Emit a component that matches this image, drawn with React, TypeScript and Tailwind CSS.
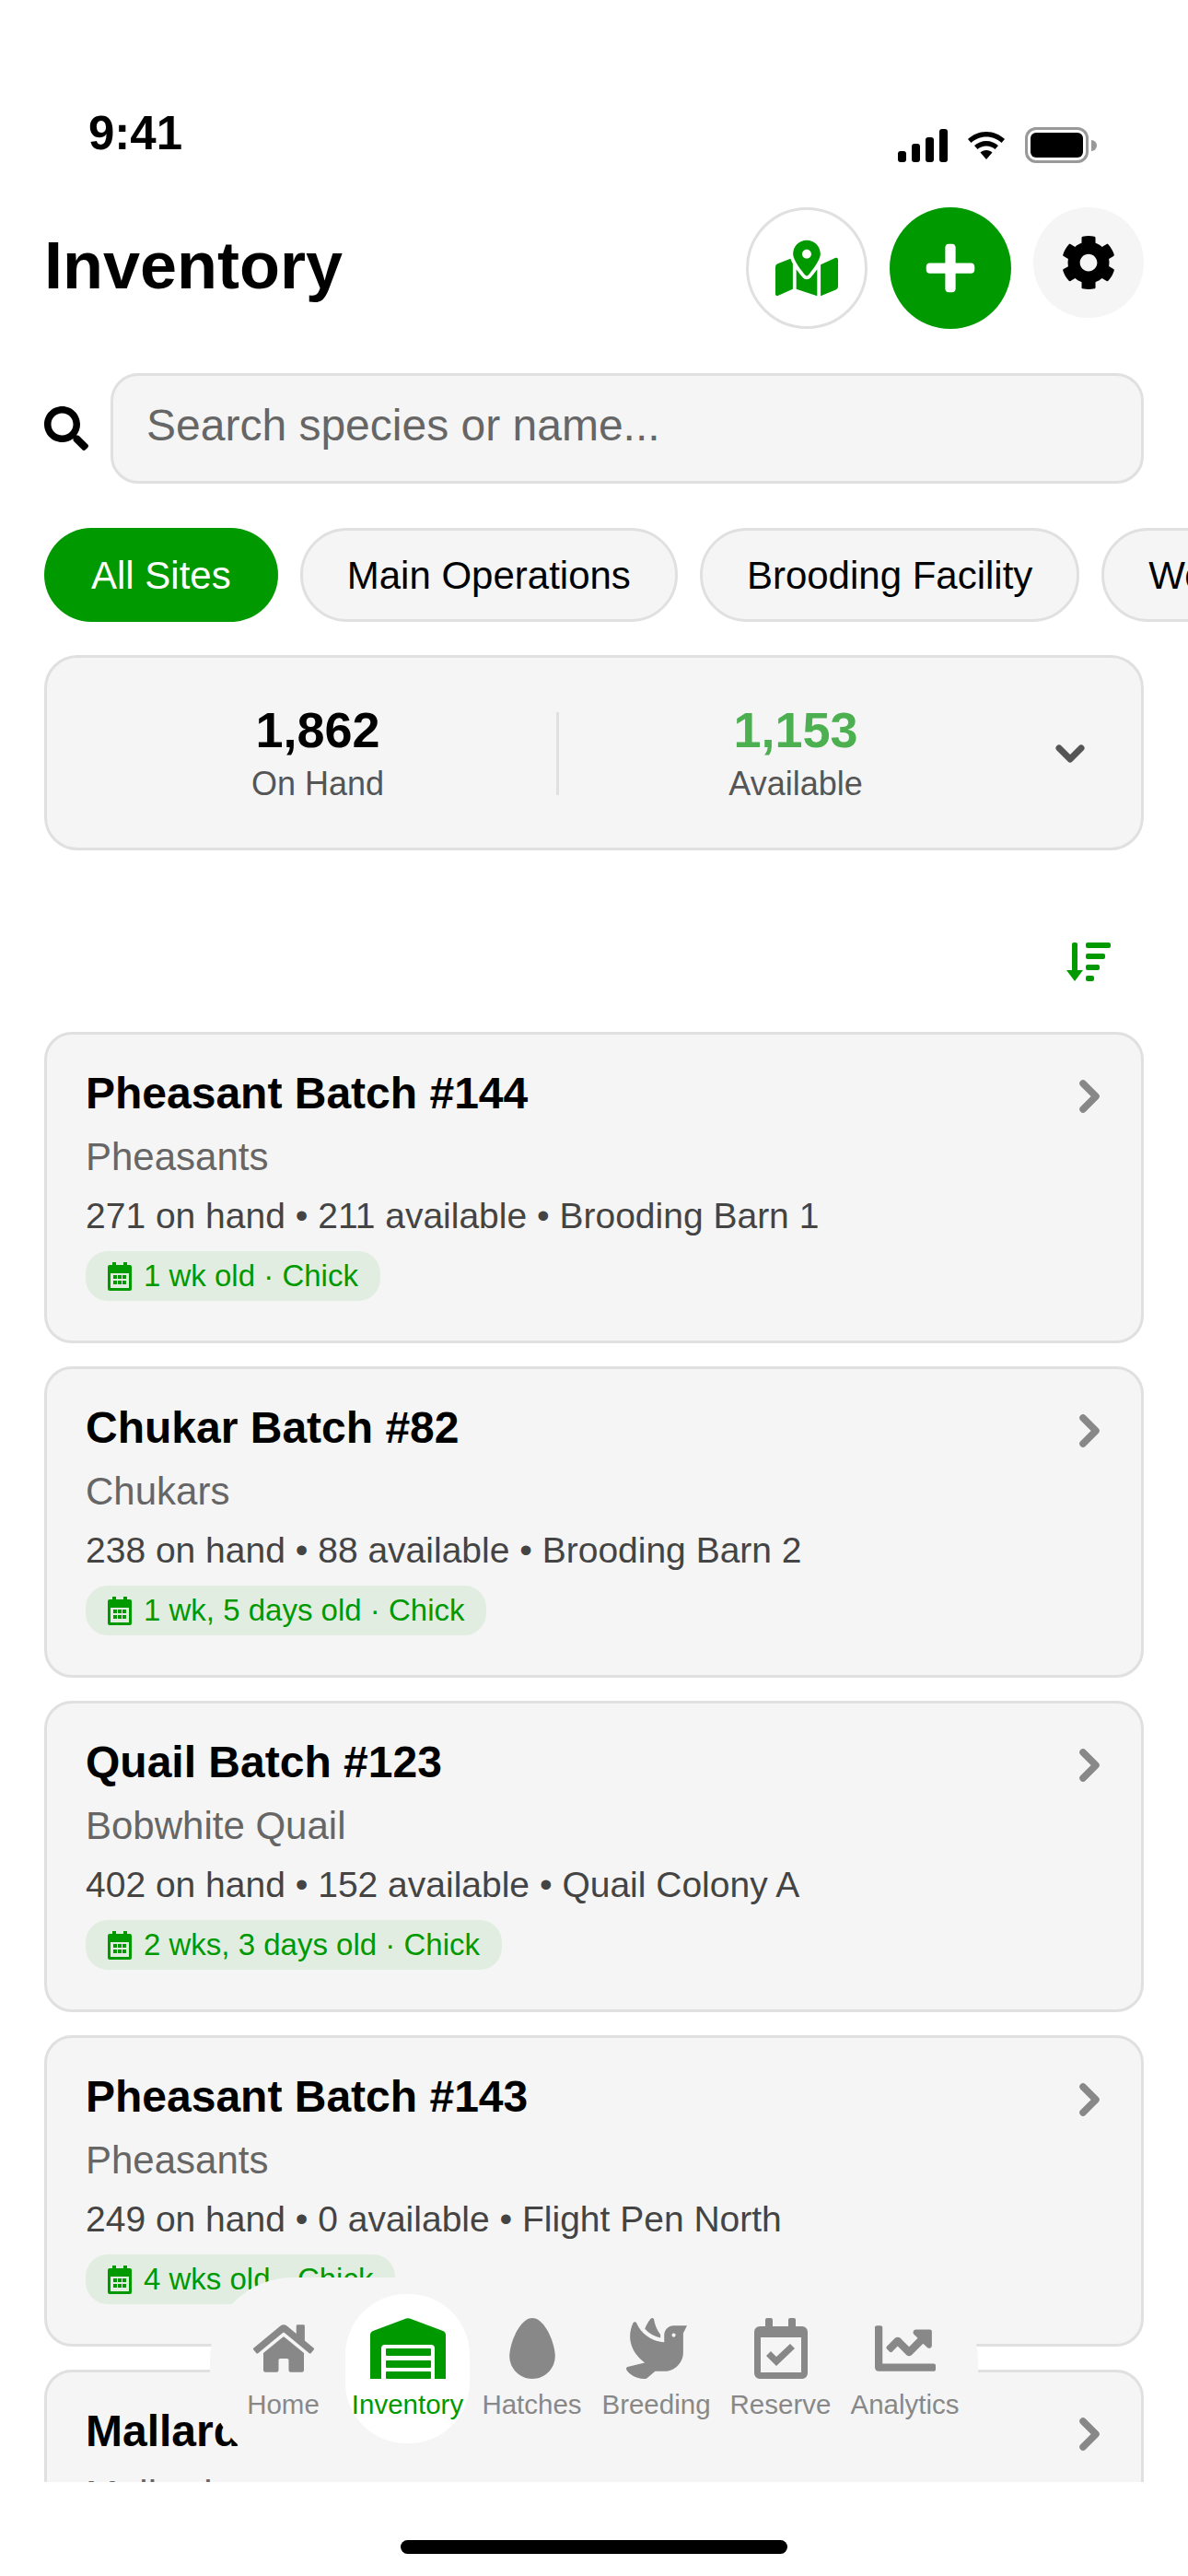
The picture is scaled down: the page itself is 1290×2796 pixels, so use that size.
import { FaChartLine, FaCog, FaDove, FaEgg, FaHome, FaMapMarkedAlt, FaPlus, FaSearch } from "react-icons/fa";

const batches = [
  { name: "Pheasant Batch #144", species: "Pheasants", detail: "271 on hand • 211 available • Brooding Barn 1", age: "1 wk old · Chick" },
  { name: "Chukar Batch #82", species: "Chukars", detail: "238 on hand • 88 available • Brooding Barn 2", age: "1 wk, 5 days old · Chick" },
  { name: "Quail Batch #123", species: "Bobwhite Quail", detail: "402 on hand • 152 available • Quail Colony A", age: "2 wks, 3 days old · Chick" },
  { name: "Pheasant Batch #143", species: "Pheasants", detail: "249 on hand • 0 available • Flight Pen North", age: "4 wks old · Chick" },
  { name: "Mallard Batch #61", species: "Mallards", detail: "312 on hand • 140 available • Waterfowl Pond", age: "3 wks old · Duckling" },
];

const sites = ["All Sites", "Main Operations", "Brooding Facility", "Woodland Pens"];

function StatusIcons() {
  return (
    <div className="mt-[23px] flex items-center">
      <svg width="54" height="36" viewBox="0 0 54 36" fill="#000">
        <rect x="0" y="24" width="9" height="12" rx="3" />
        <rect x="15" y="16" width="9" height="20" rx="3" />
        <rect x="30" y="9" width="9" height="27" rx="3" />
        <rect x="45" y="0" width="9" height="36" rx="3" />
      </svg>
      <svg className="ml-[22px]" width="40" height="30" viewBox="0 0 40 30" fill="#000">
        <path d="M20 0C12 0 5.500 3 0 8l3.500 4C8 8 13.500 5.500 20 5.500S32 8 36.500 12L40 8C34.500 3 28 0 20 0z" />
        <path d="M20 10c-5 0-9.500 2-13 5l3.500 4c2.500-2.200 5.800-3.500 9.500-3.500s7 1.300 9.500 3.500l3.500-4c-3.500-3-8-5-13-5z" />
        <path d="M20 20c-2.600 0-5 1-6.500 2.500L20 30l6.500-7.500C25 21 22.600 20 20 20z" />
      </svg>
      <div className="ml-[22px] flex h-[39px] w-[69px] items-center justify-center rounded-[12px] border-[3px] border-[#999999]">
        <div className="h-[27px] w-[57px] rounded-[6px] bg-black" />
      </div>
      <div className="ml-[3px] h-[12px] w-[6px] rounded-r-[6px] bg-[#999999]" />
    </div>
  );
}

function SortIcon() {
  return (
    <svg width="48" height="42" viewBox="0 0 48 42" fill="#009900">
      <rect x="6" y="0" width="6" height="34" rx="2" />
      <path d="M0 30h18l-9 12z" />
      <rect x="21" y="0" width="27" height="6" rx="2" />
      <rect x="21" y="12" width="21" height="6" rx="2" />
      <rect x="21" y="24" width="15" height="6" rx="2" />
      <rect x="21" y="36" width="9" height="6" rx="2" />
    </svg>
  );
}

function SmallCalendar() {
  return (
    <svg width="26" height="31" viewBox="0 0 26 31" fill="#009900">
      <rect x="5" y="0" width="4" height="6" />
      <rect x="17" y="0" width="4" height="6" />
      <path
        fillRule="evenodd"
        d="M2 3h22a2 2 0 0 1 2 2v24a2 2 0 0 1-2 2H2a2 2 0 0 1-2-2V5a2 2 0 0 1 2-2zm1 9v16h20V12H3z"
      />
      <rect x="6" y="14" width="4" height="4" />
      <rect x="11" y="14" width="4" height="4" />
      <rect x="16" y="14" width="4" height="4" />
      <rect x="6" y="20" width="4" height="4" />
      <rect x="11" y="20" width="4" height="4" />
      <rect x="16" y="20" width="4" height="4" />
    </svg>
  );
}

function WarehouseIcon() {
  return (
    <svg width="82" height="66" viewBox="0 0 82 66" fill="#009900">
      <path
        fillRule="evenodd"
        d="M39 .6a6 6 0 0 1 4 0L79 14a5 5 0 0 1 3 4.500V66H70V33a4 4 0 0 0-4-4H16a4 4 0 0 0-4 4v33H0V18.500A5 5 0 0 1 3 14z"
      />
      <rect x="17" y="33" width="49" height="8" rx="1" />
      <rect x="17" y="46" width="49" height="8" rx="1" />
      <rect x="17" y="58" width="49" height="8" rx="1" />
    </svg>
  );
}

function ReserveIcon() {
  return (
    <svg width="58" height="66" viewBox="0 0 58 66" fill="#888888">
      <rect x="12" y="0" width="8" height="12" rx="2" />
      <rect x="37" y="0" width="8" height="12" rx="2" />
      <path
        fillRule="evenodd"
        d="M6 9h46a6 6 0 0 1 6 6v45a6 6 0 0 1-6 6H6a6 6 0 0 1-6-6V15a6 6 0 0 1 6-6zm1 12v38h44V21H7z"
      />
      <path d="M13 41l5-5 6 6 15-14 5 5-20 19z" />
    </svg>
  );
}

function BatchCard({ name, species, detail, age }: (typeof batches)[number]) {
  return (
    <div className="relative h-[338px] shrink-0 rounded-[30px] border-[3px] border-[#e0e0e0] bg-[#f5f5f5] px-[42px] pt-[37px]">
      <div className="flex items-start justify-between">
        <p className="text-[48px] leading-[54px] font-bold text-black">{name}</p>
        <svg className="mt-[12px] mr-[3px]" width="22" height="36" viewBox="0 0 22 36" fill="none" stroke="#888888" strokeWidth="7.500" strokeLinecap="round" strokeLinejoin="round">
          <path d="M4 4l14 14L4 32" />
        </svg>
      </div>
      <p className="mt-[17px] text-[42px] leading-[50px] text-[#666666]">{species}</p>
      <p className="mt-[15px] text-[39px] leading-[48px] text-[#444444]">{detail}</p>
      <div className="mt-[14px] inline-flex h-[54px] items-center gap-[13px] rounded-[24px] bg-[#e2ede2] px-[24px]">
        <SmallCalendar />
        <span className="text-[33px] leading-[42px] text-[#009900]">{age}</span>
      </div>
    </div>
  );
}

function NavItem({ label, active, children }: { label: string; active?: boolean; children: React.ReactNode }) {
  return (
    <div className={`flex h-[162px] w-[135px] flex-col items-center rounded-[66px] pt-[26px] ${active ? "bg-white" : ""}`}>
      <div className="flex h-[66px] items-center justify-center">{children}</div>
      <span className={`mt-[9px] text-[29.500px] leading-[38px] whitespace-nowrap ${active ? "text-[#009900]" : "text-[#888888]"}`}>
        {label}
      </span>
    </div>
  );
}

export default function App() {
  return (
    <div className="relative flex h-[2796px] w-[1290px] flex-col overflow-hidden bg-white font-['Liberation_Sans',Arial,sans-serif]">
      {/* scrolling part, cut off above the home indicator */}
      <div className="h-[2694px] shrink-0 overflow-hidden">
        <div className="flex h-[225px] items-start justify-between pt-[115px] pr-[99px] pl-[96px]">
          <span className="text-[51px] leading-[60px] font-bold text-black">9:41</span>
          <StatusIcons />
        </div>

        <div className="mx-[48px] flex items-start justify-between">
          <h1 className="mt-[21px] text-[72px] leading-[84px] font-bold text-black">Inventory</h1>
          <div className="flex items-start gap-[24px]">
            <button className="flex h-[132px] w-[132px] items-center justify-center rounded-full border-[3px] border-[#e0e0e0] bg-white">
              <FaMapMarkedAlt size={68} color="#009900" />
            </button>
            <button className="flex h-[132px] w-[132px] items-center justify-center rounded-full bg-[#009900]">
              <FaPlus size={60} color="#ffffff" />
            </button>
            <button className="flex h-[120px] w-[120px] items-center justify-center rounded-full bg-[#f5f5f5]">
              <FaCog size={60} color="#000000" />
            </button>
          </div>
        </div>

        <div className="mx-[48px] mt-[48px] flex items-center gap-[24px]">
          <FaSearch size={48} color="#000000" />
          <div className="flex h-[120px] flex-1 items-center rounded-[30px] border-[3px] border-[#e0e0e0] bg-[#f5f5f5] px-[36px] pb-[6px] text-[48px] text-[#666666]">
            Search species or name...
          </div>
        </div>

        <div className="mt-[48px] ml-[48px] flex gap-[24px]">
          {sites.map((site, i) => (
            <div
              key={site}
              className={`flex h-[102px] shrink-0 items-center rounded-full text-[42px] whitespace-nowrap ${
                i === 0 ? "bg-[#009900] px-[51px] text-white" : "border-[3px] border-[#e0e0e0] bg-[#f5f5f5] px-[48px] text-black"
              }`}
            >
              {site}
            </div>
          ))}
        </div>

        <div className="mx-[48px] mt-[36px] flex h-[212px] items-center rounded-[36px] border-[3px] border-[#e0e0e0] bg-[#f5f5f5]">
          <div className="ml-[35px] flex w-[518px] flex-col items-center">
            <span className="text-[54px] leading-[62px] font-bold text-black">1,862</span>
            <span className="mt-[6px] text-[36px] leading-[44px] text-[#555555]">On Hand</span>
          </div>
          <div className="mt-[2px] h-[90px] w-[3px] bg-[#e0e0e0]" />
          <div className="flex w-[514px] flex-col items-center">
            <span className="text-[54px] leading-[62px] font-bold text-[#4caf50]">1,153</span>
            <span className="mt-[6px] text-[36px] leading-[44px] text-[#555555]">Available</span>
          </div>
          <svg className="mt-[1px] ml-[25px]" width="32" height="20" viewBox="0 0 32 20" fill="none" stroke="#555555" strokeWidth="7" strokeLinecap="round" strokeLinejoin="round">
            <path d="M4 4l12 12L28 4" />
          </svg>
        </div>

        <div className="mt-[100px] mr-[84px] flex justify-end">
          <SortIcon />
        </div>

        <div className="mx-[48px] mt-[55px] flex flex-col gap-[25px]">
          {batches.map((b) => (
            <BatchCard key={b.name} {...b} />
          ))}
        </div>
      </div>

      {/* floating tab bar */}
      <nav className="absolute top-[2472px] left-[228px] flex h-[204px] w-[834px] items-start justify-center rounded-[90px] bg-[#f5f5f5] pt-[18px]">
        <NavItem label="Home">
          <FaHome size={66} color="#888888" />
        </NavItem>
        <NavItem label="Inventory" active>
          <WarehouseIcon />
        </NavItem>
        <NavItem label="Hatches">
          <FaEgg size={66} color="#888888" />
        </NavItem>
        <NavItem label="Breeding">
          <FaDove size={66} color="#888888" />
        </NavItem>
        <NavItem label="Reserve">
          <ReserveIcon />
        </NavItem>
        <NavItem label="Analytics">
          <FaChartLine size={66} color="#888888" />
        </NavItem>
      </nav>

      <div className="flex flex-1 items-start justify-center pt-[63px]">
        <div className="h-[15px] w-[420px] rounded-full bg-black" />
      </div>
    </div>
  );
}
